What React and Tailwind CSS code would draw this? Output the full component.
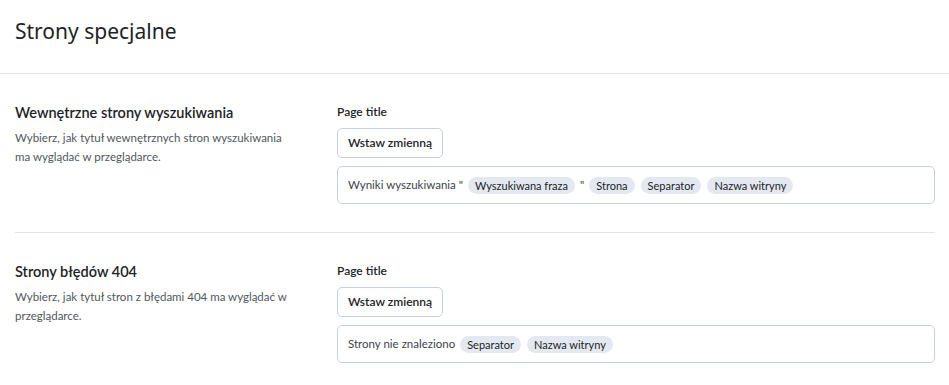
import React from 'react';

const sections = [
  {
    title: 'Wewnętrzne strony wyszukiwania',
    desc: 'Wybierz, jak tytuł wewnętrznych stron wyszukiwania ma wyglądać w przeglądarce.',
    parts: [
      { text: 'Wyniki wyszukiwania "' },
      { chip: 'Wyszukiwana fraza' },
      { text: '"' },
      { chip: 'Strona' },
      { chip: 'Separator' },
      { chip: 'Nazwa witryny' },
    ],
  },
  {
    title: 'Strony błędów 404',
    desc: 'Wybierz, jak tytuł stron z błędami 404 ma wyglądać w przeglądarce.',
    parts: [
      { text: 'Strony nie znaleziono' },
      { chip: 'Separator' },
      { chip: 'Nazwa witryny' },
    ],
  },
];

const Chip = ({ label }) => (
  <span className="inline-flex items-center h-[17px] px-[7px] mx-[1px] rounded-full bg-[#e4e9f1] text-[11px] text-[#1d2327] leading-none">
    {label}
  </span>
);

const Section = ({ s, last }) => (
  <div className={`flex pt-[29px] ${last ? '' : 'pb-[28px] border-b border-[#e2e4e7]'}`}>
    <div className="w-[322px] shrink-0">
      <h3 className="text-[14.5px] leading-[20px] font-semibold text-[#1d2327]">{s.title}</h3>
      <p className="mt-[5px] w-[281px] text-[11.5px] leading-[19px] text-[#50575e]">{s.desc}</p>
    </div>
    <div className="flex-1">
      <div className="text-[12px] leading-[18px] font-semibold text-[#1d2327]">Page title</div>
      <button className="mt-[7px] h-[30px] px-[10px] rounded-[5px] border border-[#c9d0db] bg-white text-[12px] font-semibold text-[#1d2327]">
        Wstaw zmienną
      </button>
      <div className="mt-[8px] h-[38px] rounded-[5px] border border-[#c9d0db] bg-white flex items-center px-[10px] gap-[4px] text-[11.5px] text-[#3c434a]">
        {s.parts.map((p, i) =>
          p.chip ? <Chip key={i} label={p.chip} /> : <span key={i}>{p.text}</span>
        )}
      </div>
    </div>
  </div>
);

export default function App() {
  return (
    <div className="w-[949px] h-[385px] bg-white overflow-hidden" style={{ fontFamily: 'Lato, "Noto Sans", sans-serif' }}>
      <div className="h-[74px] border-b border-[#e2e4e7] px-[15px] pt-[15px]">
        <h1 className="text-[21px] leading-[32px] font-normal text-[#1d2327]" style={{ fontFamily: '"Noto Sans", sans-serif' }}>Strony specjalne</h1>
      </div>
      <div className="pl-[15px] pr-[14px]">
        {sections.map((s, i) => (
          <Section key={i} s={s} last={i === sections.length - 1} />
        ))}
      </div>
    </div>
  );
}
